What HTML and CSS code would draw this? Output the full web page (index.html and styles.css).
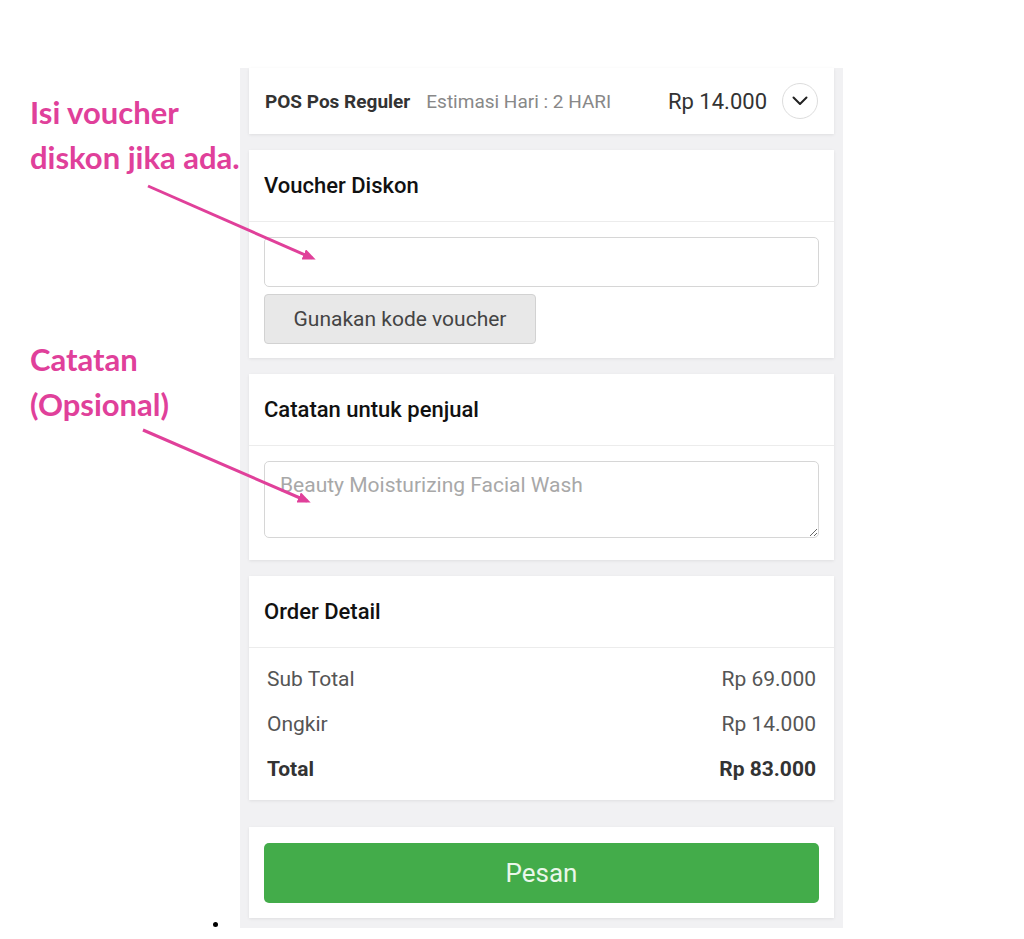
FILE: index.html
```html
<!DOCTYPE html>
<html lang="id">
<head>
    <meta charset="UTF-8">
    <meta name="viewport" content="width=device-width, initial-scale=1.0">
    <title>Checkout</title>
    <link rel="stylesheet" href="styles.css">
</head>
<body>

    <div class="page">

        <!-- pink callouts drawn over the screenshot -->
        <p class="note note-voucher">Isi voucher<br>diskon jika ada.</p>
        <p class="note note-catatan">Catatan<br>(Opsional)</p>
        <svg class="arrows" width="340" height="520" viewBox="0 0 340 520">
            <defs>
                <marker id="head" markerWidth="13" markerHeight="11" refX="9" refY="5.5" orient="auto" markerUnits="userSpaceOnUse">
                    <path d="M0 0 L13 5.5 L0 11 Z" fill="#e0409a"/>
                </marker>
            </defs>
            <line x1="148" y1="186" x2="312" y2="258" stroke="#e0409a" stroke-width="3" marker-end="url(#head)"/>
            <line x1="143" y1="430" x2="307" y2="501" stroke="#e0409a" stroke-width="3" marker-end="url(#head)"/>
        </svg>

        <div class="phone">

            <div class="card shipping">
                <span class="courier">POS Pos Reguler</span>
                <span class="estimate">Estimasi Hari : 2 HARI</span>
                <span class="price">Rp 14.000</span>
                <span class="chevron">
                    <svg width="20" height="20" viewBox="0 0 20 20"><path d="M3.5 6.5 L10 13 L16.5 6.5" fill="none" stroke="#222" stroke-width="2" stroke-linecap="round" stroke-linejoin="round"/></svg>
                </span>
            </div>

            <div class="card">
                <div class="card-head">Voucher Diskon</div>
                <div class="card-body voucher-body">
                    <input type="text" class="field">
                    <button class="btn-voucher">Gunakan kode voucher</button>
                </div>
            </div>

            <div class="card">
                <div class="card-head">Catatan untuk penjual</div>
                <div class="card-body notes-body">
                    <textarea class="field area" placeholder="Beauty Moisturizing Facial Wash"></textarea>
                </div>
            </div>

            <div class="card">
                <div class="card-head">Order Detail</div>
                <div class="card-body detail-body">
                    <div class="row"><span>Sub Total</span><span>Rp 69.000</span></div>
                    <div class="row"><span>Ongkir</span><span>Rp 14.000</span></div>
                    <div class="row total"><span>Total</span><span>Rp 83.000</span></div>
                </div>
            </div>

            <div class="card order">
                <button class="btn-order">Pesan</button>
            </div>

        </div>

        <span class="dot"></span>
    </div>

</body>
</html>
```

FILE: styles.css
```css
body {
    margin: 0;
    background-color: #fff;
    font-family: Roboto, "Liberation Sans", sans-serif;
}
.page {
    position: relative;
    height: 939px;
    padding: 68px 0 11px 240px;
    box-sizing: border-box;
    display: flex;
}
.note {
    position: absolute;
    left: 30px;
    margin: 0;
    font-family: Lato, "Open Sans", sans-serif;
    font-weight: 700;
    font-size: 31px;
    line-height: 45px;
    color: #e0409a;
}
.note-voucher {
    top: 90px;
}
.note-catatan {
    top: 337px;
}
.arrows {
    position: absolute;
    left: 0;
    top: 0;
    z-index: 2;
    pointer-events: none;
}
.phone {
    width: 603px;
    background-color: #f1f1f3;
    padding: 0 9px 10px;
    box-sizing: border-box;
    display: flex;
    flex-direction: column;
    gap: 16px;
}
.card {
    background-color: #fff;
    box-shadow: 0 1px 3px rgba(0, 0, 0, 0.08);
}
.shipping {
    height: 66px;
    display: flex;
    align-items: center;
    padding: 0 16px;
    box-sizing: border-box;
}
.courier {
    font-size: 19px;
    font-weight: 700;
    color: #333;
}
.estimate {
    margin-left: 16px;
    font-size: 19px;
    color: #888;
}
.price {
    margin-left: auto;
    font-size: 22px;
    color: #333;
}
.chevron {
    margin-left: 15px;
    width: 34px;
    height: 34px;
    border: 1px solid #ddd;
    border-radius: 50%;
    display: flex;
    align-items: center;
    justify-content: center;
}
.card-head {
    height: 71px;
    display: flex;
    align-items: center;
    padding-left: 15px;
    font-size: 22px;
    font-weight: 500;
    color: #111;
    border-bottom: 1px solid #ececec;
}
.card-body {
    padding: 15px 15px 14px;
}
.voucher-body {
    display: flex;
    flex-direction: column;
    align-items: flex-start;
    gap: 7px;
}
.field {
    width: 100%;
    height: 50px;
    box-sizing: border-box;
    border: 1px solid #d6d6d6;
    border-radius: 5px;
    font-family: inherit;
    font-size: 21px;
    background-color: #fff;
}
.btn-voucher {
    height: 50px;
    width: 272px;
    border: 1px solid #d2d2d2;
    border-radius: 4px;
    background-color: #e8e8e8;
    font-family: inherit;
    font-size: 21px;
    color: #444;
}
.notes-body {
    padding-bottom: 22px;
}
.area {
    display: block;
    height: 77px;
    padding: 11px 15px;
    resize: vertical;
}
.area::placeholder {
    color: #a8a8a8;
}
.detail-body {
    padding: 8px 18px 9px 18px;
}
.row {
    height: 45px;
    display: flex;
    justify-content: space-between;
    align-items: center;
    font-size: 21px;
    color: #555;
}
.row.total {
    font-weight: 700;
    color: #333;
}
.order {
    margin-top: 11px;
    padding: 16px 15px 15px;
}
.btn-order {
    width: 100%;
    height: 60px;
    border: none;
    border-radius: 5px;
    background-color: #43ac4a;
    color: #eaf7ea;
    font-family: inherit;
    font-size: 26px;
}
.dot {
    position: absolute;
    left: 213px;
    top: 922px;
    width: 5px;
    height: 5px;
    border-radius: 50%;
    background-color: #000;
}
```
